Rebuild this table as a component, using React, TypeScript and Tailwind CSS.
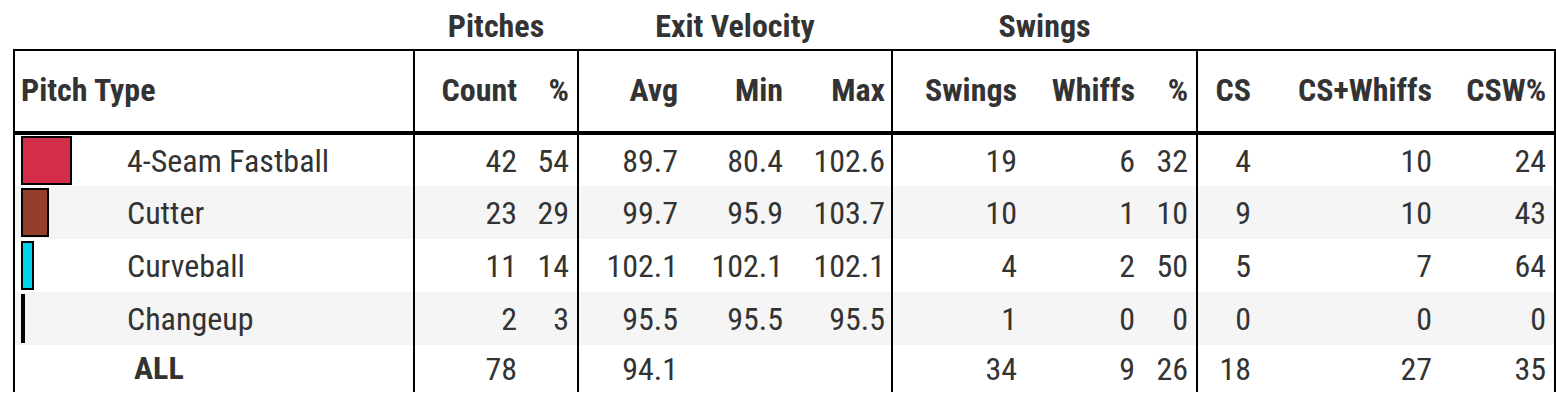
type Row = {
  name: string;
  color: string;
  count: number;
  pct: number;
  avg: string;
  min: string;
  max: string;
  swings: number;
  whiffs: number;
  whiffPct: number;
  cs: number;
  csw: number;
  cswPct: number;
};

const rows: Row[] = [
  { name: "4-Seam Fastball", color: "#d22d49", count: 42, pct: 54, avg: "89.7", min: "80.4", max: "102.6", swings: 19, whiffs: 6, whiffPct: 32, cs: 4, csw: 10, cswPct: 24 },
  { name: "Cutter", color: "#933f2c", count: 23, pct: 29, avg: "99.7", min: "95.9", max: "103.7", swings: 10, whiffs: 1, whiffPct: 10, cs: 9, csw: 10, cswPct: 43 },
  { name: "Curveball", color: "#00d1ed", count: 11, pct: 14, avg: "102.1", min: "102.1", max: "102.1", swings: 4, whiffs: 2, whiffPct: 50, cs: 5, csw: 7, cswPct: 64 },
  { name: "Changeup", color: "#1dbe3a", count: 2, pct: 3, avg: "95.5", min: "95.5", max: "95.5", swings: 1, whiffs: 0, whiffPct: 0, cs: 0, csw: 0, cswPct: 0 },
];

const th = "px-2 pb-[3px] text-right font-bold align-middle";
const td = "px-2 text-right align-middle";

export default function App() {
  return (
    <div className="bg-white w-[1556px] h-[407px] pl-[13px] font-['Roboto',sans-serif] [font-stretch:condensed] text-[32px] text-[#333333] leading-none">
      <table className="table-fixed border-collapse w-[1541px]">
        <colgroup>
          <col className="w-[400px]" />
          <col className="w-[111px]" />
          <col className="w-[53px]" />
          <col className="w-[108px]" />
          <col className="w-[105px]" />
          <col className="w-[101px]" />
          <col className="w-[133px]" />
          <col className="w-[118px]" />
          <col className="w-[54px]" />
          <col className="w-[62px]" />
          <col className="w-[181px]" />
          <col className="w-[115px]" />
        </colgroup>
        <thead>
          <tr className="h-[50px]">
            <th />
            <th colSpan={2} className="pt-[3px] font-bold text-center align-middle">Pitches</th>
            <th colSpan={3} className="pt-[3px] font-bold text-center align-middle">Exit Velocity</th>
            <th colSpan={3} className="pt-[3px] font-bold text-center align-middle">Swings</th>
            <th colSpan={3} />
          </tr>
          <tr className="h-[83px] border-t-2 border-b-4 border-black">
            <th className="pl-[6px] pr-2 pb-[3px] text-left font-bold align-middle border-l-2 border-r-2 border-black">Pitch Type</th>
            <th className={th}>Count</th>
            <th className={`${th} border-r-2 border-black`}>%</th>
            <th className={th}>Avg</th>
            <th className={th}>Min</th>
            <th className="pl-2 pr-[6px] pb-[3px] text-right font-bold align-middle border-r-2 border-black">Max</th>
            <th className={th}>Swings</th>
            <th className={th}>Whiffs</th>
            <th className={`${th} border-r-2 border-black`}>%</th>
            <th className={th}>CS</th>
            <th className={th}>CS+Whiffs</th>
            <th className={`${th} border-r-2 border-black`}>CSW%</th>
          </tr>
        </thead>
        <tbody>
          {rows.map((r, i) => (
            <tr key={r.name} className={`h-[53px] ${i % 2 === 1 ? "bg-[#f5f5f5]" : "bg-white"}`}>
              <td className="pl-[6px] align-middle border-l-2 border-r-2 border-black">
                <div className="flex items-center">
                  <div className="w-[106px] flex items-center">
                    <div
                      className="h-[49px] border-2 border-black"
                      style={{ width: `${Math.max(r.pct * 0.95, 3)}px`, backgroundColor: r.color }}
                    />
                  </div>
                  <span>{r.name}</span>
                </div>
              </td>
              <td className={td}>{r.count}</td>
              <td className={`${td} border-r-2 border-black`}>{r.pct}</td>
              <td className={td}>{r.avg}</td>
              <td className={td}>{r.min}</td>
              <td className="pl-2 pr-[6px] text-right align-middle border-r-2 border-black">{r.max}</td>
              <td className={td}>{r.swings}</td>
              <td className={td}>{r.whiffs}</td>
              <td className={`${td} border-r-2 border-black`}>{r.whiffPct}</td>
              <td className={td}>{r.cs}</td>
              <td className={td}>{r.csw}</td>
              <td className={`${td} border-r-2 border-black`}>{r.cswPct}</td>
            </tr>
          ))}
          <tr className="h-[47px] bg-white">
            <td className="pl-[119px] pb-px font-bold align-middle border-l-2 border-r-2 border-black">ALL</td>
            <td className={td}>78</td>
            <td className={`${td} border-r-2 border-black`} />
            <td className={td}>94.1</td>
            <td className={td} />
            <td className="border-r-2 border-black" />
            <td className={td}>34</td>
            <td className={td}>9</td>
            <td className={`${td} border-r-2 border-black`}>26</td>
            <td className={td}>18</td>
            <td className={td}>27</td>
            <td className={`${td} border-r-2 border-black`}>35</td>
          </tr>
        </tbody>
      </table>
    </div>
  );
}
